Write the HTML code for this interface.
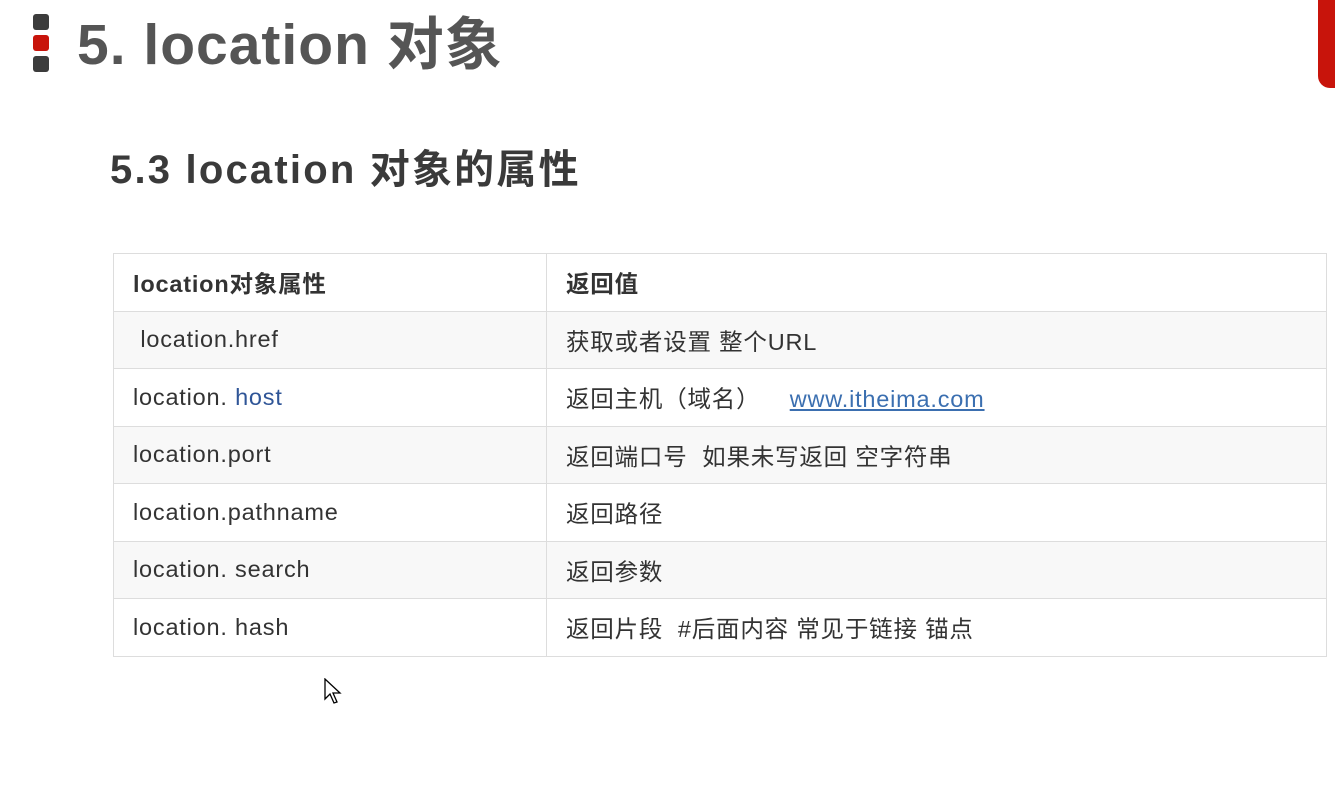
<!DOCTYPE html>
<html><head><meta charset="utf-8"><style>
body{margin:0;width:1335px;height:802px;background:#fff;position:relative;overflow:hidden;font-family:"Liberation Sans","Noto Sans CJK SC",sans-serif;color:#333}
.bar{position:absolute;left:33px;width:16px;height:16px;border-radius:3px;background:#3c3c3c}
h1{position:absolute;left:77px;top:0px;margin:0;font-size:57px;letter-spacing:1px;font-weight:bold;color:#555;line-height:90px}
h2{position:absolute;left:110px;top:145px;margin:0;font-size:40px;letter-spacing:2.2px;font-weight:bold;color:#3a3a3a;line-height:50px}
.red{position:absolute;left:1318px;top:0;width:30px;height:88px;background:#c8140b;border-bottom-left-radius:12px}
table{position:absolute;left:113px;top:253px;border-collapse:collapse;width:1214px}
td{border:1px solid #ddd;height:57.5px;padding:0 0 0 19px;font-size:23.5px;letter-spacing:0.8px;color:#333;box-sizing:border-box}
td:first-child{width:433px}
tr:nth-child(even){background:#f8f8f8}
a{color:#3b6fb0;text-decoration:underline}
</style></head><body>
<div class="bar" style="top:14px"></div>
<div class="bar" style="top:35px;background:#c8140b"></div>
<div class="bar" style="top:56px"></div>
<h1>5. location 对象</h1>
<div class="red"></div>
<h2>5.3 location 对象的属性</h2>
<table>
<tr><td style="font-weight:bold">location对象属性</td><td style="font-weight:bold">返回值</td></tr>
<tr><td>&nbsp;location.href</td><td>获取或者设置 整个URL</td></tr>
<tr><td>location. <span style="color:#2f5597">host</span></td><td>返回主机（域名） &nbsp; &nbsp;<a>www.itheima.com</a></td></tr>
<tr><td>location.port</td><td>返回端口号 &nbsp;如果未写返回 空字符串</td></tr>
<tr><td>location.pathname</td><td>返回路径</td></tr>
<tr><td>location. search</td><td>返回参数</td></tr>
<tr><td>location. hash</td><td>返回片段 &nbsp;#后面内容 常见于链接 锚点</td></tr>
</table>
<svg style="position:absolute;left:324px;top:678px" width="18" height="28" viewBox="0 0 18 28"><path d="M1 1 L1 21 L6 16 L10 25 L13 24 L9 15 L16 15 Z" fill="#fff" stroke="#000" stroke-width="1.3"/></svg>
</body></html>
